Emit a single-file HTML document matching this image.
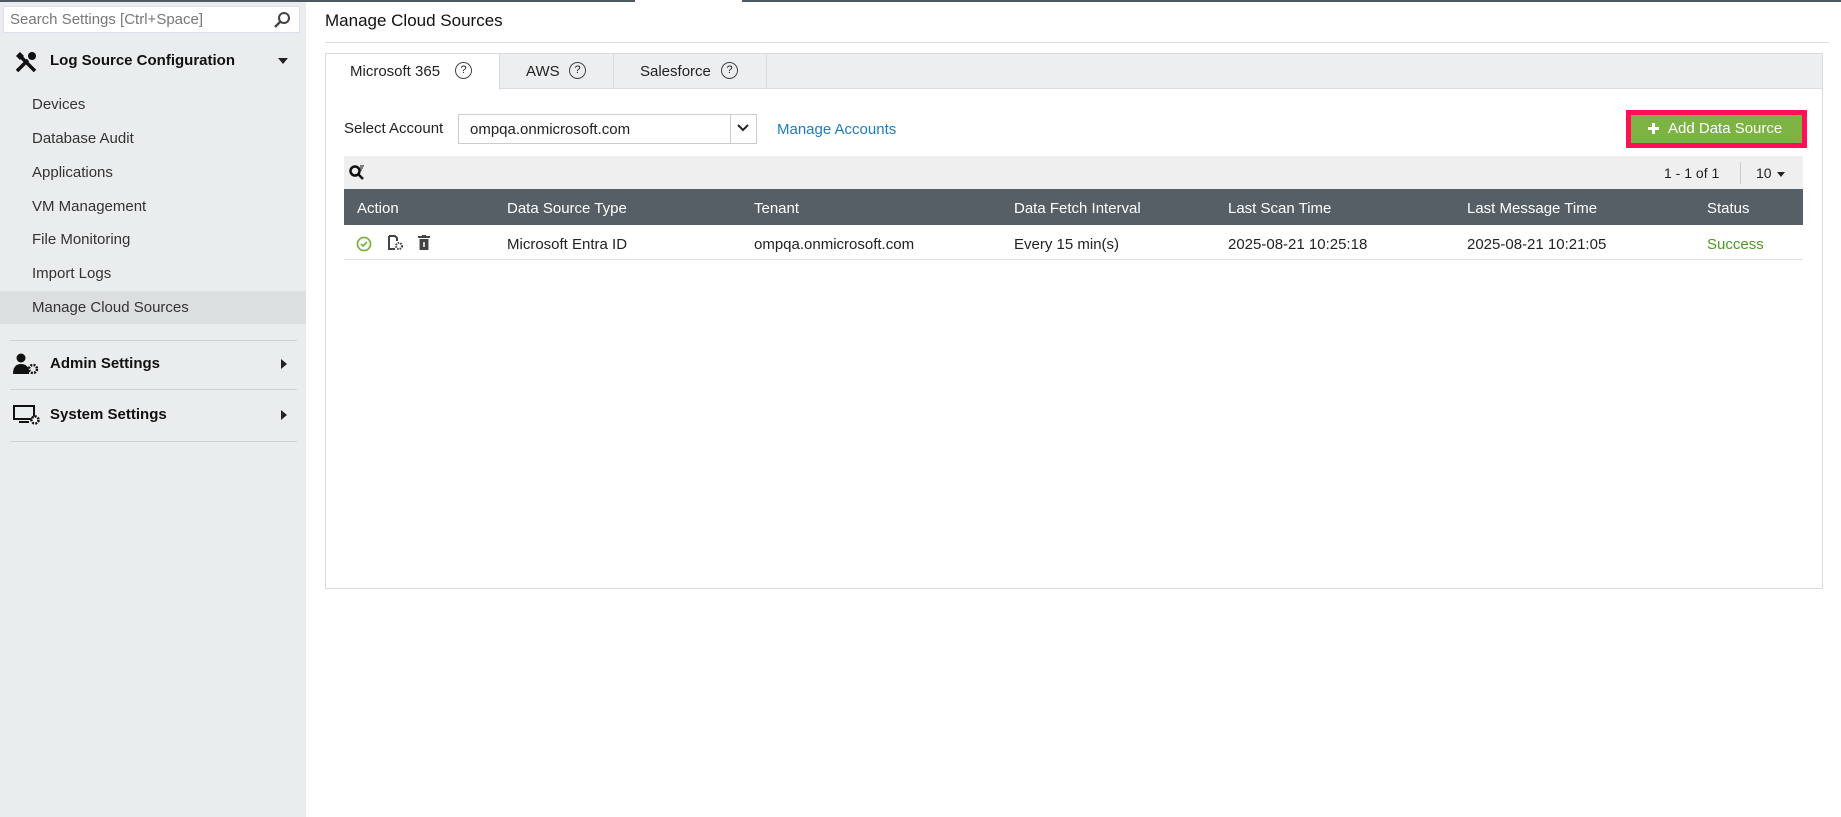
<!DOCTYPE html>
<html><head><meta charset="utf-8"><style>
*{box-sizing:border-box;margin:0;padding:0}
body{width:1841px;height:817px;background:#fff;font-family:"Liberation Sans",sans-serif;color:#222;position:relative;overflow:hidden;font-size:15px}
.abs{position:absolute}
#side{left:0;top:0;width:306px;height:817px;background:#eaeded}
.topbar{top:0;height:2px;background:#4d5a62;z-index:5}
.search{left:3px;top:6px;width:297px;height:27px;background:#fff;border:1px solid #dde;font-size:15px;color:#777;padding:4px 6px}
.item{left:32px;font-size:15px;color:#333}
.hdr{left:50px;font-size:15px;font-weight:bold;color:#111}
.sep{left:10px;width:287px;height:1px;background:#cfd3d5}
.col{top:200px;color:#fff;font-size:15px}
.cell{top:236px;font-size:15px;color:#222}
.q{position:absolute;top:62px;width:17px;height:17px;border:1.5px solid #444;border-radius:50%;font-size:11px;text-align:center;line-height:14px}
</style></head><body>
<div id="side" class="abs">
 <div class="abs search">Search Settings [Ctrl+Space]
  <svg class="abs" style="right:8px;top:4px" width="18" height="18" viewBox="0 0 18 18"><circle cx="11" cy="7" r="5" fill="none" stroke="#444" stroke-width="2"/><path d="M7.5 10.5L2 16" stroke="#444" stroke-width="2.4"/></svg>
 </div>
 <svg class="abs" style="left:14px;top:50px" width="24" height="24" viewBox="0 0 24 24"><path d="M3 21L14 10M4 4l17 17" stroke="#111" stroke-width="3.5"/><path d="M2 6l4-4 4 4-4 4z" fill="#111"/><circle cx="18" cy="6" r="4" fill="#111"/></svg>
 <div class="abs hdr" style="top:52px">Log Source Configuration</div>
 <div class="abs" style="left:278px;top:58px;border:5px solid transparent;border-top:6px solid #222"></div>
 <div class="abs item" style="top:96px">Devices</div>
 <div class="abs item" style="top:130px">Database Audit</div>
 <div class="abs item" style="top:164px">Applications</div>
 <div class="abs item" style="top:198px">VM Management</div>
 <div class="abs item" style="top:231px">File Monitoring</div>
 <div class="abs item" style="top:265px">Import Logs</div>
 <div class="abs" style="left:0;top:291px;width:306px;height:33px;background:#dcdfe0"></div>
 <div class="abs item" style="top:299px">Manage Cloud Sources</div>
 <div class="abs sep" style="top:340px"></div>
 <svg class="abs" style="left:13px;top:353px" width="26" height="22" viewBox="0 0 26 22"><circle cx="8" cy="5" r="4.5" fill="#111"/><path d="M0 21c0-8 4-10 8-10s7 2 8 6v4z" fill="#111"/><circle cx="20" cy="16" r="4" fill="none" stroke="#111" stroke-width="2.5" stroke-dasharray="2 1.2"/></svg>
 <div class="abs hdr" style="top:355px">Admin Settings</div>
 <div class="abs" style="left:281px;top:359px;border:5px solid transparent;border-left:6px solid #222"></div>
 <div class="abs sep" style="top:389px"></div>
 <svg class="abs" style="left:13px;top:405px" width="27" height="20" viewBox="0 0 27 20"><rect x="1" y="1" width="20" height="13" fill="none" stroke="#111" stroke-width="2"/><path d="M6 17h10" stroke="#111" stroke-width="2"/><circle cx="22" cy="15" r="3.5" fill="#fff" stroke="#111" stroke-width="2.5" stroke-dasharray="2 1.2"/></svg>
 <div class="abs hdr" style="top:406px">System Settings</div>
 <div class="abs" style="left:281px;top:410px;border:5px solid transparent;border-left:6px solid #222"></div>
 <div class="abs sep" style="top:441px"></div>
</div>
<div class="abs topbar" style="left:0;width:635px"></div>
<div class="abs topbar" style="left:742px;width:1099px"></div>
<div class="abs" style="left:325px;top:11px;font-size:17px;color:#111">Manage Cloud Sources</div>
<div class="abs" style="left:325px;top:42px;width:1504px;height:1px;background:#ddd"></div>
<div class="abs" style="left:325px;top:53px;width:1498px;height:536px;border:1px solid #d8dcde"></div>
<div class="abs" style="left:326px;top:54px;width:1496px;height:35px;background:#eceeef;border-bottom:1px solid #d8dcde"></div>
<div class="abs" style="left:326px;top:54px;width:174px;height:36px;background:#fff;border-right:1px solid #d8dcde"></div>
<div class="abs" style="left:500px;top:54px;width:114px;height:35px;border-right:1px solid #d8dcde"></div>
<div class="abs" style="left:614px;top:54px;width:153px;height:35px;border-right:1px solid #d8dcde"></div>
<div class="abs" style="left:350px;top:63px">Microsoft 365</div><div class="q" style="left:455px">?</div>
<div class="abs" style="left:526px;top:63px">AWS</div><div class="q" style="left:569px">?</div>
<div class="abs" style="left:640px;top:63px">Salesforce</div><div class="q" style="left:721px">?</div>
<div class="abs" style="left:344px;top:120px">Select Account</div>
<div class="abs" style="left:458px;top:114px;width:299px;height:30px;border:1px solid #ccc"></div>
<div class="abs" style="left:730px;top:115px;width:1px;height:28px;background:#ccc"></div>
<svg class="abs" style="left:736px;top:122px" width="14" height="12" viewBox="0 0 14 12"><path d="M2 3l5 5 5-5" fill="none" stroke="#222" stroke-width="2"/></svg>
<div class="abs" style="left:470px;top:121px">ompqa.onmicrosoft.com</div>
<div class="abs" style="left:777px;top:121px;color:#1f7bc1">Manage Accounts</div>
<div class="abs" style="left:1626px;top:110px;width:181px;height:38px;background:#ff0f55"></div>
<div class="abs" style="left:1631px;top:115px;width:171px;height:28px;background:#7cb342;color:#fff;padding:5px 0 0 37px">Add Data Source</div>
<div class="abs" style="left:1648px;top:127px;width:11px;height:3px;background:#fff"></div>
<div class="abs" style="left:1652px;top:123px;width:3px;height:11px;background:#fff"></div>
<div class="abs" style="left:344px;top:156px;width:1459px;height:33px;background:#efefef"></div>
<svg class="abs" style="left:348px;top:164px" width="18" height="18" viewBox="0 0 18 18"><circle cx="7" cy="7" r="4.5" fill="none" stroke="#111" stroke-width="2.5"/><path d="M10 10l5 5" stroke="#111" stroke-width="2.5"/><path d="M12 2h4M12 4h3M12 6h2" stroke="#111" stroke-width="1"/></svg>
<div class="abs" style="left:1664px;top:165px;font-size:14px">1 - 1 of 1</div>
<div class="abs" style="left:1740px;top:162px;width:1px;height:22px;background:#ccc"></div>
<div class="abs" style="left:1756px;top:165px;font-size:14px">10</div>
<div class="abs" style="left:1777px;top:172px;border:4px solid transparent;border-top:5px solid #222"></div>
<div class="abs" style="left:344px;top:189px;width:1459px;height:36px;background:#555f65"></div>
<div class="abs col" style="left:357px">Action</div>
<div class="abs col" style="left:507px">Data Source Type</div>
<div class="abs col" style="left:754px">Tenant</div>
<div class="abs col" style="left:1014px">Data Fetch Interval</div>
<div class="abs col" style="left:1228px">Last Scan Time</div>
<div class="abs col" style="left:1467px">Last Message Time</div>
<div class="abs col" style="left:1707px">Status</div>
<div class="abs" style="left:344px;top:259px;width:1459px;height:1px;background:#ddd"></div>
<svg class="abs" style="left:356px;top:236px" width="16" height="16" viewBox="0 0 16 16"><circle cx="8" cy="8" r="6.5" fill="none" stroke="#7cb342" stroke-width="1.8"/><path d="M5 8l2 2 4-4" fill="none" stroke="#7cb342" stroke-width="1.8"/></svg>
<svg class="abs" style="left:387px;top:235px" width="18" height="16" viewBox="0 0 18 16"><path d="M2 1h6l2 2v3M2 1v13h6" fill="none" stroke="#444" stroke-width="2"/><circle cx="12" cy="11" r="3" fill="none" stroke="#444" stroke-width="2" stroke-dasharray="1.5 1"/></svg>
<svg class="abs" style="left:418px;top:235px" width="12" height="16" viewBox="0 0 12 16"><path d="M0 2h12M4 0h4" stroke="#444" stroke-width="2"/><rect x="1.5" y="4" width="9" height="11" fill="#444"/><path d="M6 7v5" stroke="#fff" stroke-width="1.5"/></svg>
<div class="abs cell" style="left:507px">Microsoft Entra ID</div>
<div class="abs cell" style="left:754px">ompqa.onmicrosoft.com</div>
<div class="abs cell" style="left:1014px">Every 15 min(s)</div>
<div class="abs cell" style="left:1228px">2025-08-21 10:25:18</div>
<div class="abs cell" style="left:1467px">2025-08-21 10:21:05</div>
<div class="abs cell" style="left:1707px;color:#4a9a1e">Success</div>
</body></html>
